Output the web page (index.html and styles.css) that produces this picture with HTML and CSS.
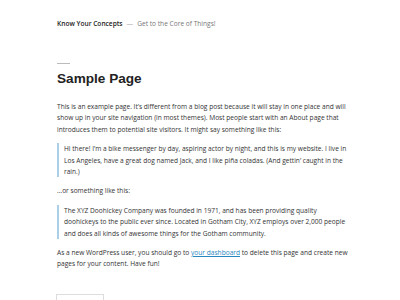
FILE: index.html
```html
<!DOCTYPE html>
<html>
<head>
<meta charset="utf-8">
<link rel="stylesheet" href="styles.css">
</head>
<body>
<header class="site-header">
  <span class="site-title">Know Your Concepts</span>
  <span class="sep">—</span>
  <span class="site-desc">Get to the Core of Things!</span>
</header>
<main class="content">
  <div class="rule"></div>
  <h1 class="page-title">Sample Page</h1>
  <p>This is an example page. It’s different from a blog post because it will stay in one place and will show up in your site navigation (in most themes). Most people start with an About page that introduces them to potential site visitors. It might say something like this:</p>
  <blockquote><p>Hi there! I’m a bike messenger by day, aspiring actor by night, and this is my website. I live in Los Angeles, have a great dog named Jack, and I like piña coladas. (And gettin’ caught in the rain.)</p></blockquote>
  <p>…or something like this:</p>
  <blockquote><p>The XYZ Doohickey Company was founded in 1971, and has been providing quality doohickeys to the public ever since. Located in Gotham City, XYZ employs over 2,000 people and does all kinds of awesome things for the Gotham community.</p></blockquote>
  <p>As a new WordPress user, you should go to <a href="#">your dashboard</a> to delete this page and create new pages for your content. Have fun!</p>
  <div class="box"></div>
</main>
</body>
</html>
```
FILE: styles.css
```css
html, body { margin: 0; padding: 0; background: #fff; }
body {
  font-family: "Open Sans", "Liberation Sans", sans-serif;
  color: #333;
  font-size: 6.6px;
  line-height: 11.4px;
  height: 300px;
  overflow: hidden;
}
.site-header {
  padding: 18px 0 0 57px;
  height: 20px;
  display: flex;
  gap: 4px;
  align-items: baseline;
}
.site-title { color: #222; font-weight: 600; }
.sep { color: #aaa; }
.site-desc { color: #777; }
.content { margin-left: 57px; width: 294px; padding-top: 25px; }
.rule { width: 13px; height: 1px; background: #bbb; }
.page-title {
  margin: 5px 0 12px;
  font-family: "Liberation Sans", Arial, sans-serif;
  font-size: 13.6px;
  line-height: 20px;
  font-weight: 700;
  color: #222;
}
p { margin: 0 0 8px; }
blockquote {
  margin: 0 0 8px;
  border-left: 2px solid #a9d0e6;
  padding: 0 0 0 5px;
}
blockquote p { margin: 0; }
a { color: #2a86be; text-decoration: underline; }
.box { margin: 24px 0 0 -1px; width: 46px; height: 20px; border: 1px solid #ddd; }
```
